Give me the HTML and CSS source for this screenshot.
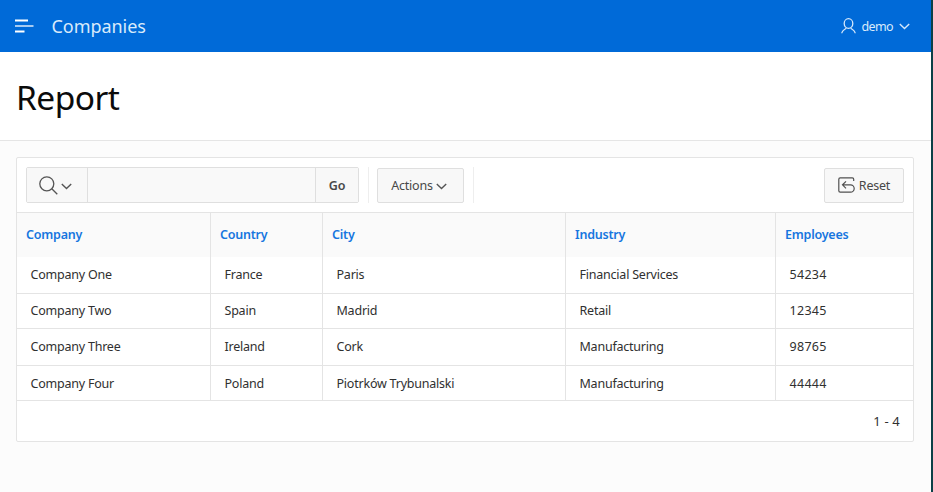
FILE: index.html
```html
<!DOCTYPE html>
<html lang="en">
<head>
<meta charset="utf-8">
<title>Companies</title>
<link rel="stylesheet" href="styles.css">
</head>
<body>
<div class="page">
  <header class="topbar">
    <svg class="menu" width="19" height="15" viewBox="0 0 19 15" fill="none" stroke="#fff"><path d="M0 1.500h13M0 12.500h9.500" stroke-width="2.200"/><path d="M0 7h18.500" stroke-width="1.300"/></svg>
    <span class="brand">Companies</span>
    <div class="user">
      <svg width="15" height="16" viewBox="0 0 15 16" fill="none" stroke="#d5e8fb" stroke-width="1.300"><ellipse cx="7.500" cy="5.500" rx="4.300" ry="4.800"/><path d="M.8 15.300C1 12.800 2.500 11.900 5.300 10.200M14.200 15.300c-.2-2.500-1.700-3.400-4.500-5.100"/></svg>
      <span class="username">demo</span>
      <svg class="user-caret" width="11" height="7" viewBox="0 0 11 7" fill="none" stroke="#d5e8fb" stroke-width="1.400"><path d="M.8 1l4.700 4.500L10.200 1"/></svg>
    </div>
  </header>
  <div class="title"><h1>Report</h1></div>
  <main>
    <section class="report">
      <div class="toolbar">
        <div class="search">
          <button class="search-menu" aria-label="Search columns">
            <svg width="19" height="19" viewBox="0 0 19 19" fill="none" stroke="#555" stroke-width="1.300"><circle cx="7.800" cy="7.800" r="7"/><path d="M12.800 12.800l5.500 5.500"/></svg>
            <svg class="caret" width="11" height="7" viewBox="0 0 11 7" fill="none" stroke="#555" stroke-width="1.400"><path d="M.8 1l4.700 4.500L10.200 1"/></svg>
          </button>
          <input class="field" type="text" aria-label="Search">
          <button class="go">Go</button>
        </div>
        <span class="sep"></span>
        <button class="button actions"><span>Actions</span>
          <svg class="caret" width="11" height="7" viewBox="0 0 11 7" fill="none" stroke="#555" stroke-width="1.400"><path d="M.8 1l4.700 4.500L10.200 1"/></svg>
        </button>
        <span class="sep"></span>
        <button class="button reset">
          <svg width="17" height="16" viewBox="0 0 17 16" fill="none" stroke="#505050" stroke-width="1.200"><path d="M15.700 4V2.200Q15.700.8 14.300.8H2.200Q.8.800.8 2.200v11.600q0 1.400 1.400 1.400h10.300a3.700 3.700 0 0 0 0-7.400H4.800M8 4.300L4.500 7.800 8 11.300"/></svg>
          <span>Reset</span>
        </button>
      </div>
      <table>
        <colgroup><col class="c1"><col class="c2"><col class="c3"><col class="c4"><col class="c5"></colgroup>
        <thead><tr><th>Company</th><th>Country</th><th>City</th><th>Industry</th><th>Employees</th></tr></thead>
        <tbody>
          <tr class="first"><td>Company One</td><td>France</td><td>Paris</td><td>Financial Services</td><td class="num">54234</td></tr>
          <tr class="short"><td>Company Two</td><td>Spain</td><td>Madrid</td><td>Retail</td><td class="num">12345</td></tr>
          <tr class="tall"><td>Company Three</td><td>Ireland</td><td>Cork</td><td>Manufacturing</td><td class="num">98765</td></tr>
          <tr class="short last"><td>Company Four</td><td>Poland</td><td>Piotrków Trybunalski</td><td>Manufacturing</td><td class="num">44444</td></tr>
        </tbody>
      </table>
      <div class="pagination">1 - 4</div>
    </section>
  </main>
</div>
</body>
</html>
```
FILE: styles.css
```css
* { box-sizing: border-box; }
html, body { margin: 0; height: 100%; overflow: hidden; }
body {
  background: #0c4047;
  padding-right: 2px;
  font-family: "Noto Sans", "Open Sans", sans-serif;
  font-size: 12.5px;
  letter-spacing: -0.22px;
  color: #303030;
}
.page { height: 492px; background: #fcfcfc; }
.topbar {
  display: flex;
  align-items: center;
  height: 52px;
  padding: 0 21px 0 16px;
  background: #006ad8;
  color: #d9eafb;
}
.menu { margin-left: -1px; }
.brand { margin-left: 17.5px; font-size: 18px; letter-spacing: -0.05px; }
.user { display: flex; align-items: center; margin-left: auto; }
.username { margin: 0 6px 0 5px; letter-spacing: -0.6px; }
.user-caret { margin-top: 1px; }
.title {
  display: flex;
  align-items: center;
  height: 89px;
  padding: 0 16px;
  background: #fff;
  border-bottom: 1px solid #e5e5e5;
}
h1 { margin: 1px 0 0; font-size: 33.5px; font-weight: 400; letter-spacing: -0.55px; color: #0b0b0b; }
main { padding: 16px 17px 0 16px; }
.report { height: 285px; border: 1px solid #e4e4e4; border-radius: 2px; background: #fff; }
.toolbar { display: flex; height: 54px; padding: 9px 9px 8px; }
button {
  display: flex;
  align-items: center;
  justify-content: center;
  padding: 0;
  border: 0;
  background: #f8f8f8;
  font: inherit;
  letter-spacing: inherit;
  color: #484848;
}
.search {
  display: flex;
  width: 333px;
  height: 36px;
  border: 1px solid #dfdfdf;
  border-radius: 2px;
  background: #f8f8f8;
}
.search-menu { width: 61px; gap: 3px; padding: 0 3px 0 0; border-right: 1px solid #dfdfdf; }
.caret { margin-top: 2px; }
.field { flex: 1; min-width: 0; border: 0; padding: 0 8px; background: #f9f9f9; font: inherit; }
.go { width: 43px; border-left: 1px solid #dfdfdf; font-weight: 600; }
.sep { width: 1px; height: 36px; margin: 0 8px 0 9px; background: #eee; }
.button { height: 35px; margin-top: 1px; padding-bottom: 1px; border: 1px solid #dfdfdf; border-radius: 2px; }
.actions { width: 87px; gap: 3px; padding-right: 3px; }
.reset { width: 80px; gap: 4px; margin-left: auto; }
table { width: 896px; table-layout: fixed; border-collapse: separate; border-spacing: 0; }
.c1 { width: 194px; }
.c2 { width: 112px; }
.c3 { width: 243px; }
.c4 { width: 210px; }
.c5 { width: 137px; }
th {
  height: 45px;
  padding: 0 9px 2px;
  border-top: 1px solid #e4e4e4;
  background: #fafafa;
  color: #1676df;
  font-weight: 600;
  text-align: left;
}
td { height: 36px; padding: 0 13.5px 1px; border-bottom: 1px solid #e4e4e4; }
.first td { height: 37px; padding-bottom: 2px; }
.short td { height: 35px; }
.tall td { height: 37px; }
.last td { padding-bottom: 0; }
td.num { letter-spacing: 0.3px; }
th:not(:last-child), td:not(:last-child) { border-right: 1px solid #e4e4e4; }
.pagination { display: flex; justify-content: flex-end; padding: 11px 13px 0 0; font-size: 13px; letter-spacing: 0.2px; }
```
